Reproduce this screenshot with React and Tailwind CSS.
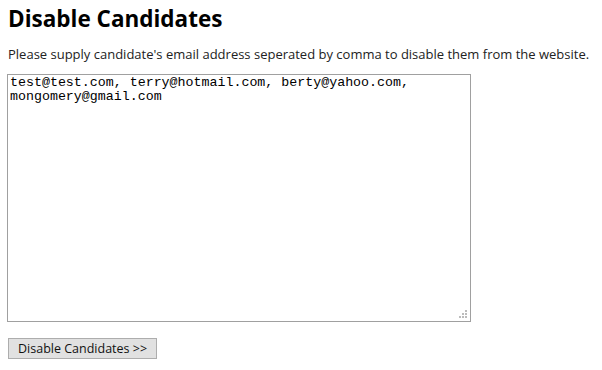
export default function App() {
  return (
    <div className="w-[602px] h-[370px] bg-white px-[8px] pt-[5px] text-black" style={{ fontFamily: '"Open Sans", "Noto Sans", sans-serif' }}>
      <h1 className="text-[22.5px] font-bold leading-[28px]">Disable Candidates</h1>
      <p className="mt-[12px] text-[13px] leading-[18px] text-[#222]">
        Please supply candidate's email address seperated by comma to disable them from the website.
      </p>
      <div className="relative mt-[11px] -ml-[1px] w-[464px] h-[248px]">
        <textarea
          className="block w-full h-full border border-[#a0a0a0] px-[2px] py-[1px] text-[13.3px] leading-[14px] resize-none outline-none"
          style={{ fontFamily: '"Liberation Mono", monospace' }}
          spellCheck={false}
          defaultValue="test@test.com, terry@hotmail.com, berty@yahoo.com, mongomery@gmail.com"
        />
        {/* resize grip */}
        <div className="absolute right-[4px] bottom-[4px] grid grid-cols-3 gap-[1px]">
          <span className="w-[2px] h-[2px]" />
          <span className="w-[2px] h-[2px]" />
          <span className="w-[2px] h-[2px] bg-[#bcbcbc]" />
          <span className="w-[2px] h-[2px]" />
          <span className="w-[2px] h-[2px] bg-[#bcbcbc]" />
          <span className="w-[2px] h-[2px] bg-[#bcbcbc]" />
          <span className="w-[2px] h-[2px] bg-[#bcbcbc]" />
          <span className="w-[2px] h-[2px] bg-[#bcbcbc]" />
          <span className="w-[2px] h-[2px] bg-[#bcbcbc]" />
        </div>
      </div>
      <button className="mt-[16px] h-[21px] px-[9px] bg-[#e1e1e1] border border-[#adadad] text-[12.5px] leading-[18px] text-[#111]">
        Disable Candidates &gt;&gt;
      </button>
    </div>
  );
}
